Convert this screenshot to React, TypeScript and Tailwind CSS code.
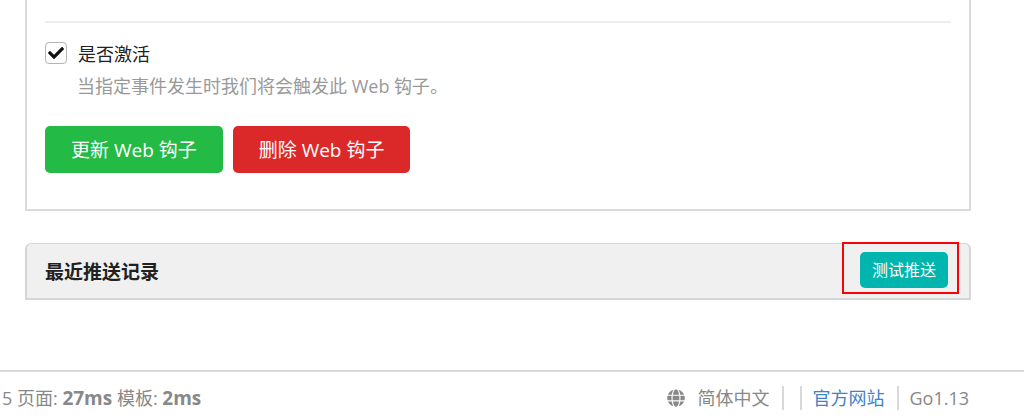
import { FaCheck, FaGlobe } from "react-icons/fa";

function ActiveField() {
  return (
    <div className="flex flex-col">
      <div className="flex h-6 items-center gap-[11px]">
        <span className="grid size-[22px] shrink-0 place-items-center">
          <input
            id="active"
            type="checkbox"
            defaultChecked
            className="peer col-start-1 row-start-1 size-[22px] appearance-none rounded-[4px] border border-[#b4b4b5] bg-white"
          />
          <FaCheck
            aria-hidden="true"
            className="pointer-events-none invisible col-start-1 row-start-1 size-4 text-[#111] peer-checked:visible"
          />
        </span>
        <label htmlFor="active" className="pt-[2px] text-[#212121]">
          是否激活
        </label>
      </div>
      <p className="mt-[9px] pl-8 leading-6 text-[#999]">
        当指定事件发生时我们将会触发此 Web 钩子。
      </p>
    </div>
  );
}

function WebhookForm() {
  return (
    <form
      className="border-2 border-t-0 border-[#dadadb] px-[18px] pt-[21px] pb-9"
      onSubmit={(event) => event.preventDefault()}
    >
      <hr className="border-t-2 border-[#eeeeee]" />
      <div className="mt-[18px]">
        <ActiveField />
      </div>
      <div className="mt-7 flex gap-[10px] text-[19px] text-white">
        <button
          type="submit"
          className="h-[47px] rounded-[5px] bg-[#23ba45] px-[26px] pt-px"
        >
          更新 Web 钩子
        </button>
        <button
          type="button"
          className="h-[47px] rounded-[5px] bg-[#db2929] px-[26px] pt-px"
        >
          删除 Web 钩子
        </button>
      </div>
    </form>
  );
}

function RecentDeliveries() {
  return (
    <section className="mt-8 flex h-[57px] items-center justify-between rounded-t-[6px] border-2 border-t-1 border-[#d6d6d7] bg-[#f0f0f0] pr-[21px] pb-[2px] pl-[18px]">
      <h4 className="pt-1 text-[19px] font-bold text-[#212121]">
        最近推送记录
      </h4>
      <div className="relative flex">
        <button
          type="button"
          className="h-9 rounded-[5px] bg-[#00b5ad] px-3 text-[16px] text-white"
        >
          测试推送
        </button>
        <span
          aria-hidden="true"
          className="pointer-events-none absolute -top-[10px] -right-[11px] -bottom-[6px] -left-[18px] border-2 border-[#fb0207]"
        />
      </div>
    </section>
  );
}

function Footer() {
  return (
    <footer className="mt-[70px] flex items-center justify-between border-t-2 border-[#d9d9d9] pt-[14px] pr-[55px] pl-[2px] leading-6 text-[#888]">
      <p>
        5 页面: <strong className="text-[19px] font-bold">27ms</strong> 模板:{" "}
        <strong className="text-[19px] font-bold">2ms</strong>
      </p>
      <div className="flex items-center">
        <button type="button" className="flex items-center gap-3 pr-[13px]">
          <FaGlobe aria-hidden="true" className="size-[18px]" />
          简体中文
        </button>
        <span className="h-6 w-[18px] border-l-2 border-[#d9d9d9]" />
        <a
          href="#website"
          className="border-l-2 border-[#d9d9d9] pr-[13px] pl-[10px] text-[#4183c4]"
        >
          官方网站
        </a>
        <span className="border-l-2 border-[#d9d9d9] pl-[10px]">Go1.13</span>
      </div>
    </footer>
  );
}

export default function App() {
  return (
    <div className="flow-root bg-white font-['Open_Sans','Noto_Sans_CJK_SC',sans-serif] text-[18px]">
      <main className="mr-[53px] ml-[25px] flow-root">
        <WebhookForm />
        <RecentDeliveries />
      </main>
      <Footer />
    </div>
  );
}
